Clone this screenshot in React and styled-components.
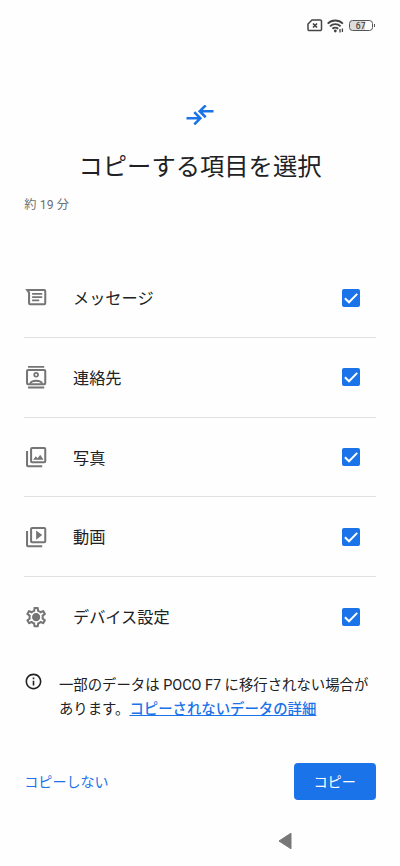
import React, { useState } from "react";
import styled, { createGlobalStyle } from "styled-components";
import {
  MdOutlineVideoLibrary,
  MdOutlineSettings,
  MdInfoOutline,
} from "react-icons/md";

const MessageIcon = () => (
  <svg viewBox="0 0 24 24" fill="none" stroke="currentColor" strokeWidth="2">
    <path d="M3.500 5H20a1 1 0 0 1 1 1v12a1 1 0 0 1-1 1H6a1 1 0 0 1-1-1V7.500L3.200 5z" />
    <path d="M8 8.800h10M8 12h10M8 15.200h7" strokeWidth="1.800" />
  </svg>
);

const ContactsIcon = () => (
  <svg viewBox="0 0 24 24" fill="none" stroke="currentColor" strokeWidth="2">
    <rect x="3" y="5" width="18" height="14" rx="1" />
    <path d="M4 1.800h16M4 22.200h16" strokeWidth="1.800" />
    <circle cx="12" cy="9.700" r="1.900" strokeWidth="1.700" />
    <path d="M6 18.500c1.500-4 10.500-4 12 0" strokeWidth="1.900" />
  </svg>
);

const PhotosIcon = () => (
  <svg viewBox="0 0 24 24" fill="none" stroke="currentColor" strokeWidth="2">
    <rect x="7" y="3" width="14" height="14" rx="1" />
    <path d="M3 6v14a1 1 0 0 0 1 1h14" />
    <path
      d="M9 14.500l2.700-3.500 1.800 2 2.500-3.300 3.300 4.800z"
      fill="currentColor"
      stroke="none"
    />
  </svg>
);

const SettingsIcon = () => (
  <svg viewBox="0 0 24 24">
    <MdOutlineSettings size={24} />
    <circle cx="12" cy="12" r="3.500" fill="currentColor" />
  </svg>
);

const items = [
  { id: "messages", label: "メッセージ", Icon: MessageIcon },
  { id: "contacts", label: "連絡先", Icon: ContactsIcon },
  { id: "photos", label: "写真", Icon: PhotosIcon },
  { id: "videos", label: "動画", Icon: MdOutlineVideoLibrary },
  { id: "settings", label: "デバイス設定", Icon: SettingsIcon },
];

const StatusIcons = () => (
  <StyledStatusBar>
    <svg width="16" height="13" viewBox="0 0 16 13" fill="none" stroke="#444">
      <path
        d="M5 1h8.200a1.300 1.300 0 0 1 1.300 1.300v8a1.300 1.300 0 0 1-1.300 1.300H2.300A1.300 1.300 0 0 1 1 10.300V5z"
        strokeWidth="1.500"
      />
      <path d="M6 4.500l4 4M10 4.500l-4 4" strokeWidth="1.700" />
    </svg>
    <svg width="18" height="14" viewBox="0 0 18 14" fill="none" stroke="#444">
      <path
        d="M0.700 4.600a10.800 10.800 0 0 1 15.200 0M3 7.300a7.500 7.500 0 0 1 10.600 0M5.400 9.800a4.200 4.200 0 0 1 5.800 0"
        strokeWidth="1.900"
      />
      <circle cx="8.300" cy="12" r="1.400" fill="#444" stroke="none" />
      <path d="M13 10v3.500M15.400 9.500v3.500" strokeWidth="1.300" />
    </svg>
    <Battery>67</Battery>
  </StyledStatusBar>
);

const App = () => {
  const [selected, setSelected] = useState(items.map((item) => item.id));

  const toggle = (id) =>
    setSelected((prev) =>
      prev.includes(id) ? prev.filter((other) => other !== id) : [...prev, id]
    );

  return (
    <>
      <GlobalStyle />
      <Screen>
        <StatusIcons />
        <Header>
          <svg
            width="28"
            height="20"
            viewBox="0 0 28 20"
            fill="none"
            stroke="#1a73e8"
            strokeWidth="2.600"
          >
            <path d="M0.500 13.300h13M8.300 7.200l6 6.100-6 6.100" />
            <path d="M27.500 6.300h-13M19.700 0.400l-6 5.900 6 5.900" />
          </svg>
          <Title>コピーする項目を選択</Title>
          <Estimate>約 19 分</Estimate>
        </Header>
        <List>
          {items.map(({ id, label, Icon }) => (
            <Row key={id} onClick={() => toggle(id)}>
              <RowIcon>
                <Icon />
              </RowIcon>
              <Label>{label}</Label>
              <Checkbox
                role="checkbox"
                aria-label={label}
                aria-checked={selected.includes(id)}
                $checked={selected.includes(id)}
              >
                {selected.includes(id) && (
                  <svg width="18" height="18" viewBox="0 0 18 18">
                    <path
                      d="M2.900 9.200l4.100 4.100 8.200-8.400"
                      fill="none"
                      stroke="#fff"
                      strokeWidth="2"
                    />
                  </svg>
                )}
              </Checkbox>
            </Row>
          ))}
        </List>
        <Notice>
          <MdInfoOutline size={19} />
          <NoticeText>
            一部のデータは POCO F7 に移行されない場合が
            <br />
            あります。<NoticeLink>コピーされないデータの詳細</NoticeLink>
          </NoticeText>
        </Notice>
        <Actions>
          <TextButton>コピーしない</TextButton>
          <PrimaryButton>コピー</PrimaryButton>
        </Actions>
        <NavBar>
          <svg width="14" height="18" viewBox="0 0 14 18">
            <path
              d="M13 1.200v15.600L1 9z"
              fill="#777"
              stroke="#777"
              strokeLinejoin="round"
            />
          </svg>
        </NavBar>
      </Screen>
    </>
  );
};

export default App;

const GlobalStyle = createGlobalStyle`
  * {
    box-sizing: border-box;
  }

  body {
    margin: 0;
    background: #fefefe;
    font-family: Roboto, "Noto Sans CJK JP", sans-serif;
    color: #202124;
  }

  svg {
    display: block;
    flex-shrink: 0;
  }

  button {
    border: 0;
    padding: 0;
    font-family: inherit;
    cursor: pointer;
  }
`;

const Screen = styled.div`
  width: 400px;
  height: 866px;
  padding: 0 24.300px;
  display: flex;
  flex-direction: column;
  overflow: hidden;
`;

const StyledStatusBar = styled.div`
  height: 51px;
  display: flex;
  align-items: center;
  justify-content: flex-end;
  gap: 4px;
`;

const Battery = styled.div`
  position: relative;
  width: 24px;
  height: 11px;
  margin-right: 3px;
  border: 1px solid #555;
  border-radius: 3.500px;
  background: linear-gradient(to right, #dcdcdc 67%, #fefefe 67%);
  font-family: Roboto, sans-serif;
  font-size: 8.500px;
  font-weight: 500;
  line-height: 10px;
  text-align: center;
  color: #444;

  &::after {
    content: "";
    position: absolute;
    top: 3px;
    right: -3px;
    width: 1px;
    height: 3px;
    background: #555;
  }
`;

const Header = styled.header`
  height: 207.300px;
  padding-top: 54px;
  display: flex;
  flex-direction: column;
  align-items: center;
`;

const Title = styled.h1`
  margin: 24px 0 0;
  font-size: 24.300px;
  font-weight: 400;
  line-height: 36px;
  white-space: nowrap;
`;

const Estimate = styled.div`
  align-self: flex-start;
  margin-top: 11px;
  font-size: 12.200px;
  line-height: 18px;
  word-spacing: 0.300px;
  color: #6b6e72;
`;

const List = styled.div`
  display: flex;
  flex-direction: column;
`;

const Row = styled.div`
  height: 79.700px;
  padding-right: 15.700px;
  display: flex;
  align-items: center;
  cursor: pointer;

  &:not(:last-child) {
    border-bottom: 1px solid #dfe0e1;
  }
`;

const RowIcon = styled.div`
  width: 48.700px;
  color: #757575;

  > svg {
    width: 24.300px;
    height: 24.300px;
  }
`;

const Label = styled.div`
  flex: 1;
  padding-top: 3px;
  font-size: 16.200px;
  line-height: 24px;
`;

const Checkbox = styled.div`
  width: 18px;
  height: 18px;
  border-radius: 2px;
  background: ${({ $checked }) => ($checked ? "#1a73e8" : "transparent")};
  box-shadow: ${({ $checked }) =>
    $checked ? "none" : "inset 0 0 0 2px #757575"};
`;

const Notice = styled.div`
  margin-top: 15.700px;
  display: flex;
  gap: 15.700px;
`;

const NoticeText = styled.p`
  margin: 0;
  padding-top: 1.500px;
  font-size: 14.380px;
  line-height: 24px;
  white-space: nowrap;
`;

const NoticeLink = styled.a`
  color: #1a73e8;
  font-weight: 500;
  text-decoration: underline;
  text-decoration-thickness: 1px;
  cursor: pointer;
`;

const Actions = styled.div`
  margin-top: 40.700px;
  display: flex;
  align-items: center;
  justify-content: space-between;
`;

const TextButton = styled.button`
  background: none;
  color: #1a73e8;
  font-size: 14.050px;
`;

const PrimaryButton = styled.button`
  width: 82px;
  height: 37px;
  border-radius: 4px;
  background: #1a73e8;
  color: #fff;
  font-size: 14.200px;
`;

const NavBar = styled.nav`
  margin-top: 32px;
  padding-right: 84px;
  display: flex;
  justify-content: flex-end;
`;
